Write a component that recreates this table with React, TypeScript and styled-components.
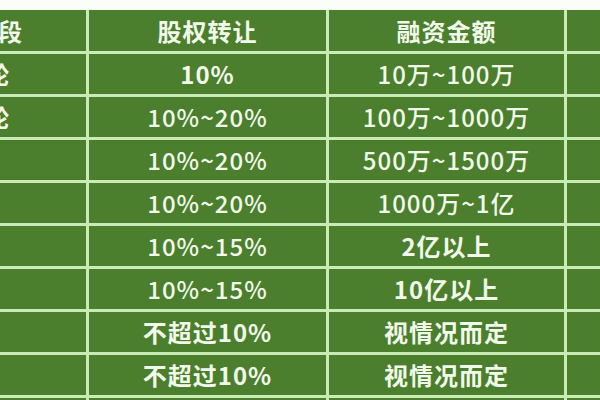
import styled, { createGlobalStyle } from 'styled-components'

const GlobalStyle = createGlobalStyle`
  html, body {
    margin: 0;
    padding: 0;
    background: #fbfef8;
  }
`

const Page = styled.div`
  width: 600px;
  height: 400px;
  overflow: hidden;
  padding-top: 10px;
  box-sizing: border-box;
`

// the screenshot is a crop, so the table runs past both edges
const Grid = styled.div`
  display: grid;
  grid-template-columns: 226px 237px 235px 160px;
  grid-template-rows: 41px;
  grid-auto-rows: 40px;
  gap: 3px;
  width: max-content;
  margin-left: -140px;
  background: #c9ecb6;
  font-family: 'Noto Sans CJK SC', 'Liberation Sans', sans-serif;
`

const Cell = styled.div<{ $bold?: boolean }>`
  display: flex;
  align-items: center;
  justify-content: center;
  background: #4b7e2d;
  color: #f1faea;
  font-size: 24px;
  letter-spacing: 1px;
  font-weight: ${(p) => (p.$bold ? 700 : 500)};
  white-space: nowrap;
  line-height: 1;
`

const header = ['融资阶段', '股权转让', '融资金额', '']

const rows = [
  ['种子轮', '10%', '10万~100万'],
  ['天使轮', '10%~20%', '100万~1000万'],
  ['A轮', '10%~20%', '500万~1500万'],
  ['B轮', '10%~20%', '1000万~1亿'],
  ['C轮', '10%~15%', '2亿以上'],
  ['D轮', '10%~15%', '10亿以上'],
  ['E轮', '不超过10%', '视情况而定'],
  ['F轮', '不超过10%', '视情况而定'],
  ['', '', ''],
]

const App = () => {
  return (
    <Page>
      <GlobalStyle />
      <Grid>
        {header.map((h, i) => (
          <Cell key={'h' + i} $bold>
            {h}
          </Cell>
        ))}
        {rows.map((r, i) => (
          <>
            <Cell key={'a' + i} $bold>{r[0]}</Cell>
            <Cell key={'b' + i} $bold={i === 0 || i >= 6}>{r[1]}</Cell>
            <Cell key={'c' + i} $bold={i >= 4}>{r[2]}</Cell>
            <Cell key={'d' + i} />
          </>
        ))}
      </Grid>
    </Page>
  )
}

export default App
